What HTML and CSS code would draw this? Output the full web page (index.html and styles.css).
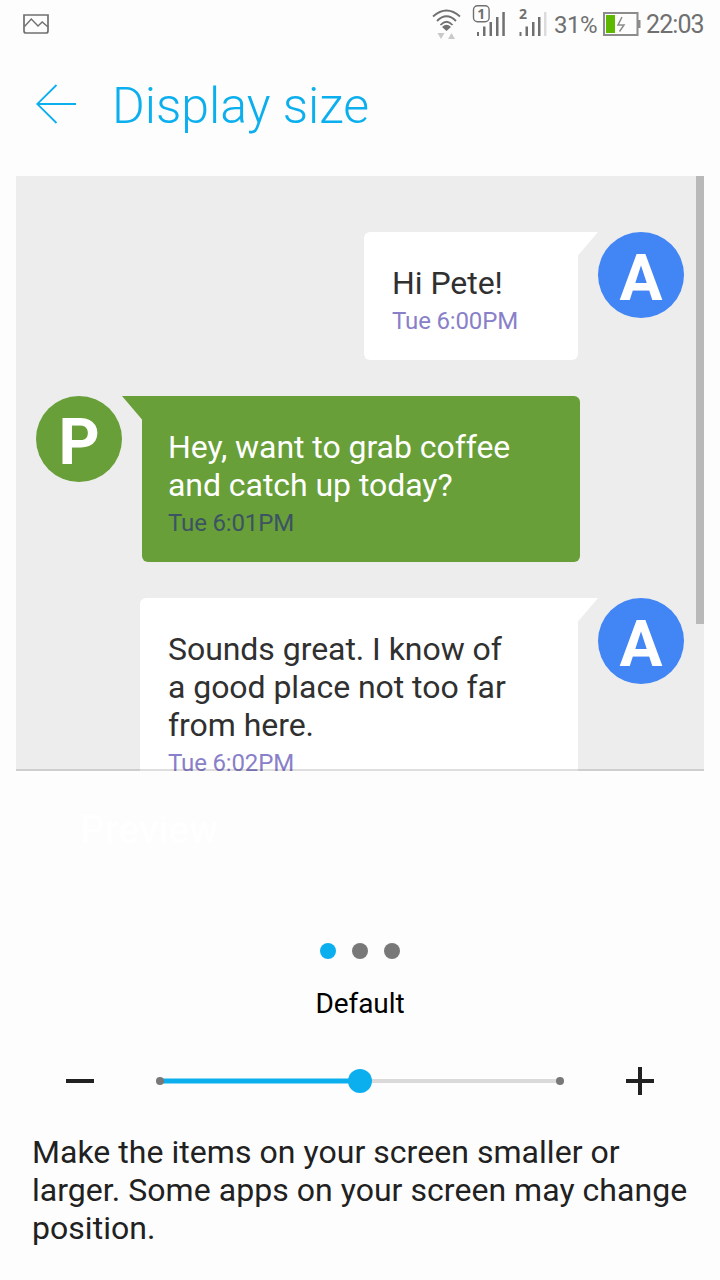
FILE: index.html
```html
<!DOCTYPE html>
<html lang="en">
<head>
<meta charset="utf-8">
<title>Display size</title>
<link rel="stylesheet" href="styles.css">
</head>
<body>
<div class="screen">
  <div class="status">
    <svg class="status-image" width="26" height="20" viewBox="0 0 26 20" fill="none" stroke="#707070"><path stroke-width="1.7" d="M1 1H25V17Q25 19 23 19H3Q1 19 1 17Z"/><path stroke-width="1.4" d="M1.500 12.500L8.300 5L15 12L19.200 8L25 13"/></svg>
    <svg class="status-wifi" width="30" height="32" viewBox="0 0 30 32"><g fill="none" stroke="#707070" stroke-width="1.800"><path d="M1 7.500Q14.500-4.500 28 7.500"/><path d="M5 12Q14.500 2.500 24 12"/><path d="M8.500 16Q14.500 9.500 20.500 16"/></g><path fill="#707070" d="M10 18Q14.500 13.500 19 18L14.500 22Z"/><path fill="#c9c9c9" d="M5.500 24h7l-3.500 6zM16 30h7l-3.500-6z"/></svg>
    <svg class="status-sim" width="34" height="34" viewBox="0 0 34 34"><rect x="2.500" y="1.700" width="15.600" height="16" rx="4" fill="none" stroke="#707070" stroke-width="1.400"/><text class="sim-number" x="10.200" y="14.500" text-anchor="middle">1</text><path fill="#707070" d="M6 28h2v4H6zM12 22.500h2.500V32H12zM18.500 18h2.500v14h-2.500zM25 13h2.500v19H25zM31.300 8h2.500v24h-2.500z"/></svg>
    <svg class="status-sim second" width="30" height="34" viewBox="0 0 30 34"><text class="sim-number" x="5" y="14.500" text-anchor="middle">2</text><path fill="#707070" d="M1.500 28h2v4h-2zM7.500 22.500h2.500V32H7.500zM14 18h2.500v14H14zM20 13h2.500v19H20z"/><path fill="#dcdcdc" d="M26 8h2.500v24H26z"/></svg>
    <span class="percent">31%</span>
    <svg class="status-battery" width="38" height="24" viewBox="0 0 38 24"><rect x="1" y="1" width="33.500" height="22" fill="none" stroke="#8c8c8c" stroke-width="2"/><path fill="#8c8c8c" d="M35 8h2.500v8H35z"/><path fill="#5eb700" d="M3 3h9v18H3z"/><path fill="none" stroke="#8c8c8c" stroke-width="1.500" d="M19 5L15 13H21L16.500 19.500"/></svg>
    <span class="clock">22:03</span>
  </div>

  <header class="header">
    <svg class="back" width="40" height="40" viewBox="0 0 40 40" fill="none" stroke="#0cafee" stroke-width="1.800"><path d="M40 20H1M20.500 1L1.200 20L20.500 39"/></svg>
    <h1 class="title">Display size</h1>
  </header>

  <main class="preview">
    <div class="row sent">
      <div class="bubble white short"><p class="message">Hi Pete!</p><p class="time">Tue 6:00PM</p></div>
      <svg class="tail" width="20" height="24" viewBox="0 0 20 24"><path fill="#fff" d="M0 0H20L0 23.500Z"/></svg>
      <div class="avatar blue">A</div>
    </div>
    <div class="row received">
      <div class="avatar green">P</div>
      <svg class="tail" width="20" height="24" viewBox="0 0 20 24"><path fill="#689f38" d="M0 0H20V23.500Z"/></svg>
      <div class="bubble reply"><p class="message">Hey, want to grab coffee<br>and catch up today?</p><p class="time">Tue 6:01PM</p></div>
    </div>
    <div class="row sent">
      <div class="bubble white"><p class="message">Sounds great. I know of<br>a good place not too far<br>from here.</p><p class="time">Tue 6:02PM</p></div>
      <svg class="tail" width="20" height="24" viewBox="0 0 20 24"><path fill="#fff" d="M0 0H20L0 23.500Z"/></svg>
      <div class="avatar blue">A</div>
    </div>
    <div class="scrollbar"></div>
    <div class="divider"></div>
  </main>

  <div class="caption">Preview</div>
  <div class="pager"><i class="dot active"></i><i class="dot"></i><i class="dot"></i></div>
  <div class="current">Default</div>
  <div class="slider">
    <svg width="28" height="28" viewBox="0 0 28 28"><path fill="#212121" d="M0 12h28v4H0z"/></svg>
    <svg width="408" height="28" viewBox="0 0 408 28"><path fill="#dadada" d="M4 12h400v4H4z"/><path fill="#0cafee" d="M4 11.500h200v5H4z"/><circle cx="4" cy="14" r="4" fill="#787878"/><circle cx="404" cy="14" r="4" fill="#787878"/><circle cx="204" cy="14" r="12" fill="#0cafee"/></svg>
    <svg width="28" height="28" viewBox="0 0 28 28"><path fill="#212121" d="M0 12h12V0h4v12h12v4H16v12h-4V16H0z"/></svg>
  </div>
  <p class="summary">Make the items on your screen smaller or<br>larger. Some apps on your screen may change<br>position.</p>
</div>
</body>
</html>
```
FILE: styles.css
```css
* { box-sizing: border-box; }
body { margin: 0; background: #fdfdfd; font-family: Roboto, "Liberation Sans", sans-serif; }
p, h1 { margin: 0; }
svg { display: block; flex: none; }
.screen { width: 720px; height: 1280px; overflow: hidden; white-space: nowrap; }

.status { display: flex; height: 48px; padding: 0 12px 0 23px; color: #707070; font-size: 25px; line-height: 49px; }
.status-image { margin-top: 14px; }
.status-wifi { margin: 9px 0 0 382.5px; }
.status-sim { margin: 4px 0 0 9.500px; }
.status-sim.second { margin-left: 13px; }
.sim-number { font: bold 14px "Noto Sans", sans-serif; fill: #707070; }
.percent { width: 43px; margin-left: 6px; font-size: 24px; line-height: 50px; letter-spacing: -0.5px; }
.status-battery { margin: 12px 0 0 6px; }
.clock { margin-left: 5px; letter-spacing: -0.9px; line-height: 50px; }

.header { display: flex; align-items: center; height: 128px; padding: 0 36px 16px; }
.title { margin: 3px 0 0 36px; color: #0cafee; font-size: 50px; font-weight: 300; line-height: 60px; }

.preview { position: relative; display: flex; flex-direction: column; gap: 36px; height: 595px; margin: 0 16px; padding: 56px 20px 0; background: #ededed; overflow: hidden; }
.row { display: flex; align-items: flex-start; flex: none; }
.sent { justify-content: flex-end; }
.avatar { flex: none; width: 86px; height: 86px; border-radius: 50%; color: #fff; font-size: 64px; font-weight: 700; line-height: 93px; text-align: center; }
.blue { background: #4285f4; }
.green { background: #689f38; }
.bubble { width: 438px; padding: 32px 26px 25px; border-radius: 6px; }
.white { padding-left: 28px; background: #fff; color: #303030; border-top-right-radius: 0; }
.short { width: 214px; }
.reply { background: #689f38; color: #fff; border-top-left-radius: 0; }
.message { font-size: 32px; line-height: 38px; letter-spacing: -0.05px; }
.time { margin-top: 5px; color: #8980c9; font-size: 24px; line-height: 28px; letter-spacing: -0.15px; }
.reply .time { color: #3c5363; }
.scrollbar { position: absolute; top: 0; right: 0; width: 8px; height: 448px; background: #b9b9b9; }
.divider { position: absolute; right: 0; bottom: 0; left: 0; height: 2px; background: rgba(0, 0, 0, .13); }

.caption { height: 164px; padding: 36px 0 0 80px; color: #fff; font-size: 39px; font-weight: 500; line-height: 46px; }
.pager { display: flex; justify-content: center; gap: 16px; padding-top: 8px; }
.dot { width: 16px; height: 16px; border-radius: 50%; background: #787878; }
.active { background: #0cafee; }
.current { margin-top: 28px; color: #000; font-size: 28px; line-height: 34px; text-align: center; letter-spacing: -0.1px; }
.slider { display: flex; justify-content: space-between; padding: 46px 66px 0; }
.summary { margin-top: 38px; padding-left: 32px; color: #212121; font-size: 32px; line-height: 38px; letter-spacing: 0.04px; }
```
